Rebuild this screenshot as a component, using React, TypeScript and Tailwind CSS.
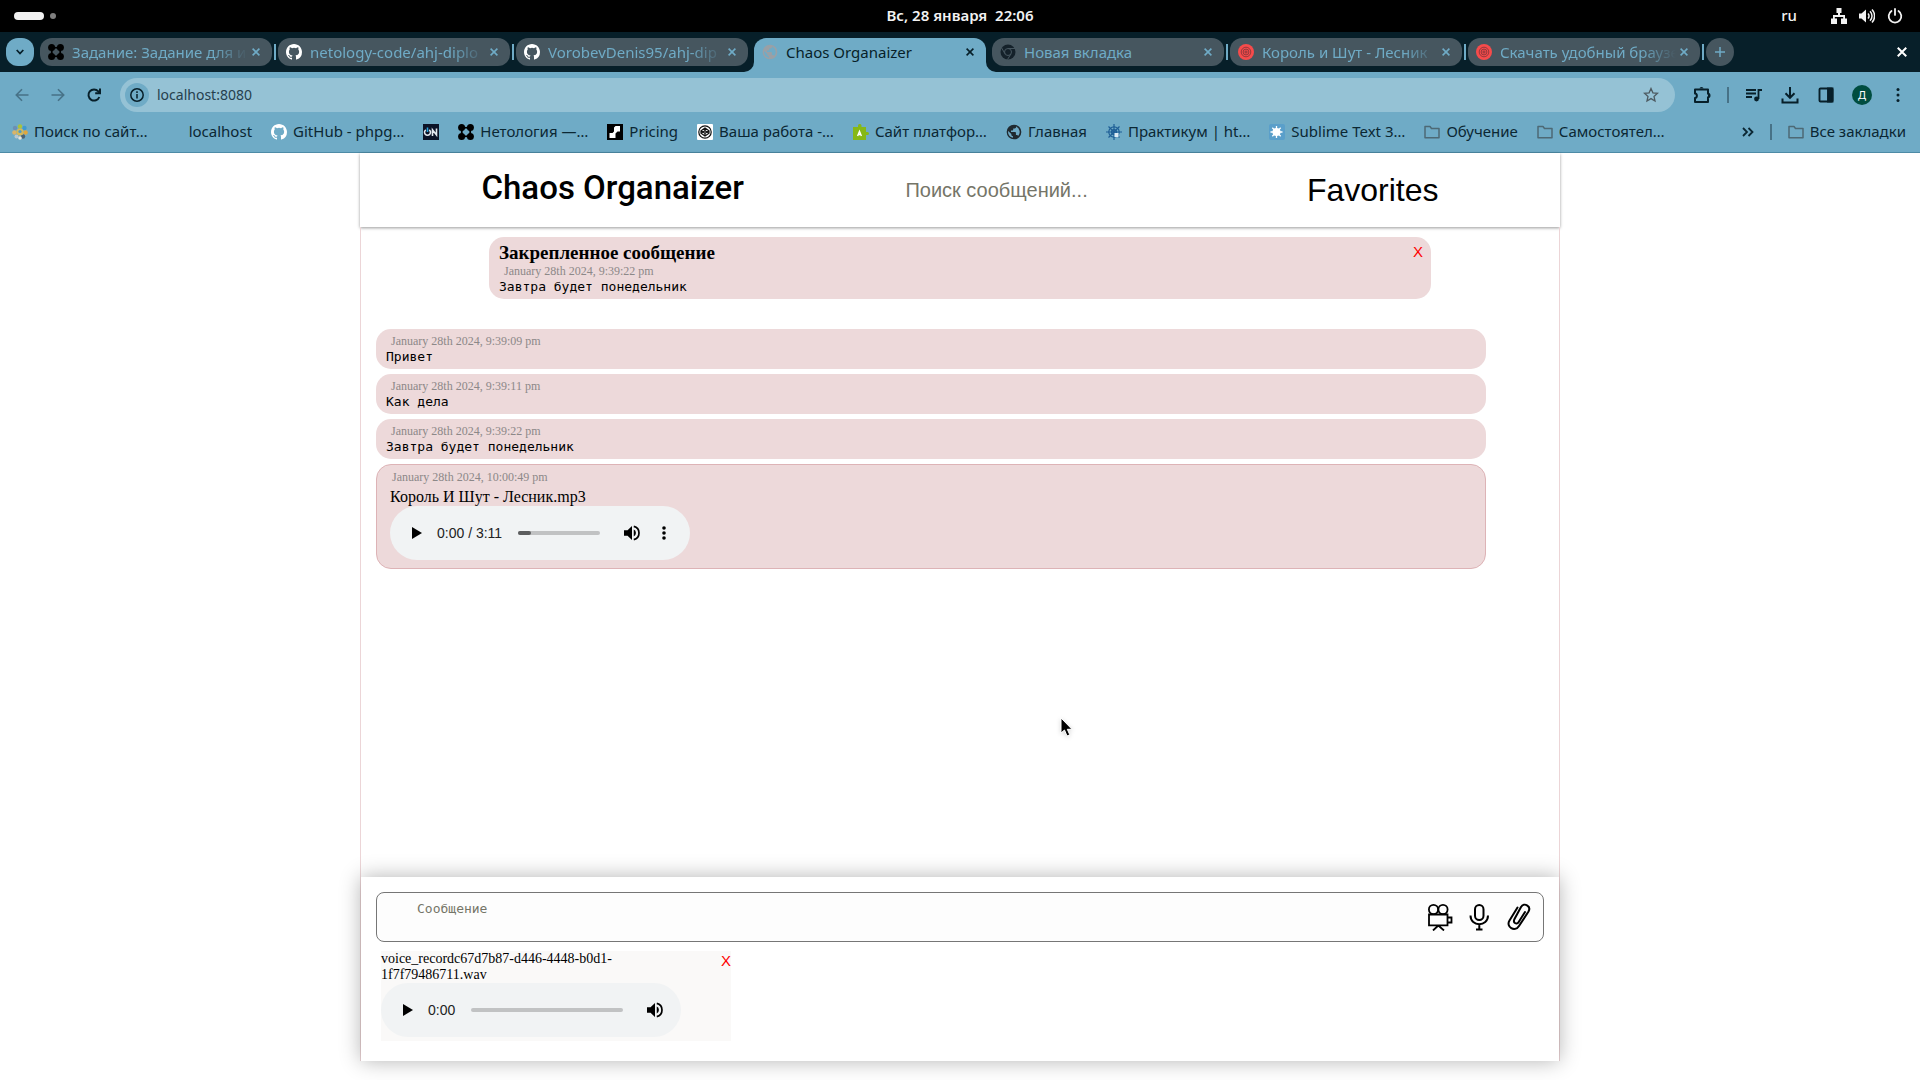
import type { ReactNode } from "react";

type IconProps = { className?: string };

function GitHubIcon({ className }: IconProps) {
  return (
    <svg viewBox="0 0 16 16" fill="#fff" className={className} aria-hidden="true">
      <path d="M8 0C3.58 0 0 3.58 0 8c0 3.54 2.29 6.53 5.47 7.59.4.07.55-.17.55-.38 0-.19-.01-.82-.01-1.49-2.01.37-2.53-.49-2.69-.94-.09-.23-.48-.94-.82-1.13-.28-.15-.68-.52-.01-.53.63-.01 1.08.58 1.23.82.72 1.21 1.87.87 2.33.66.07-.52.28-.87.51-1.07-1.78-.2-3.64-.89-3.64-3.95 0-.87.31-1.59.82-2.15-.08-.2-.36-1.02.08-2.12 0 0 .67-.21 2.2.82a7.6 7.6 0 0 1 4 0c1.53-1.04 2.2-.82 2.2-.82.44 1.1.16 1.92.08 2.12.51.56.82 1.27.82 2.15 0 3.07-1.87 3.75-3.65 3.95.29.25.54.73.54 1.48 0 1.07-.01 1.93-.01 2.2 0 .21.15.46.55.38A8.01 8.01 0 0 0 16 8c0-4.42-3.58-8-8-8Z" />
    </svg>
  );
}

function NetologyIcon({ className }: IconProps) {
  return (
    <svg viewBox="0 0 16 16" className={className} aria-hidden="true">
      <circle cx="3.600" cy="3.600" r="3.500" />
      <circle cx="12.400" cy="3.600" r="3.500" />
      <circle cx="3.600" cy="12.400" r="3.500" />
      <circle cx="12.400" cy="12.400" r="3.500" />
      <circle cx="8" cy="8" r="4.300" fill="none" stroke="#000" strokeWidth="1.800" />
    </svg>
  );
}

function GlobeIcon({ className }: IconProps) {
  return (
    <svg viewBox="0 0 24 24" fill="currentColor" className={className} aria-hidden="true">
      <path d="M12 1a11 11 0 1 0 0 22 11 11 0 0 0 0-22Zm-1.500 19.800A9 9 0 0 1 3.200 10.500L8 15v1.200c0 1.200 1 2.200 2.500 2.200v2.400Zm7.700-2.700c-.3-.9-1.100-1.600-2.100-1.600h-1.200v-3.300c0-.6-.5-1.100-1.100-1.100H7.500V9.900h2.200c.6 0 1.100-.5 1.100-1.100V6.600H13c1.200 0 2.200-1 2.200-2.200v-.5a9 9 0 0 1 3 14.200Z" />
    </svg>
  );
}

function ChromeIcon({ className }: IconProps) {
  return (
    <svg viewBox="0 0 16 16" className={className} aria-hidden="true">
      <circle cx="8" cy="8" r="7.500" fill="#14212a" />
      <g fill="none" stroke="#46565f" strokeWidth="1">
        <circle cx="8" cy="8" r="3.500" />
        <path d="M8 4.500h7M5 9.800 1.600 3.900M11 9.800 7.500 15.500" />
      </g>
      <circle cx="8" cy="8" r="2" fill="#14212a" />
    </svg>
  );
}

function TargetIcon({ className }: IconProps) {
  return (
    <svg viewBox="0 0 16 16" className={className} aria-hidden="true">
      <circle cx="8" cy="8" r="8" fill="#f64b4b" />
      <g fill="none" stroke="#6b2f35" strokeWidth="0.700">
        <circle cx="8" cy="8" r="4.800" />
        <circle cx="8" cy="8" r="2.900" />
        <circle cx="8" cy="8" r="1.100" />
      </g>
    </svg>
  );
}

function ColorGlobeIcon({ className }: IconProps) {
  return (
    <svg viewBox="0 0 16 16" className={className} aria-hidden="true">
      <circle cx="8" cy="2.500" r="2.200" fill="#a9c33c" />
      <circle cx="3" cy="4" r="2.200" fill="#6c8fb5" />
      <circle cx="12.500" cy="4" r="2.200" fill="#3f9ad0" />
      <circle cx="2.400" cy="8.500" r="2.200" fill="#d9b46a" />
      <circle cx="13.600" cy="8.500" r="2.200" fill="#e0a63c" />
      <circle cx="4.500" cy="12.500" r="2" fill="#b9c7cf" />
      <circle cx="11" cy="12.500" r="2.200" fill="#4b6272" />
      <circle cx="8" cy="14" r="1.800" fill="#e8e4da" />
      <circle cx="8" cy="8" r="3.600" fill="#d4b85a" />
      <circle cx="8" cy="7.500" r="1.600" fill="#4f9bc0" />
    </svg>
  );
}

function OnIcon({ className }: IconProps) {
  return (
    <svg viewBox="0 0 16 16" className={className} aria-hidden="true">
      <path d="M0 0h16v16H0z" fill="#0b1226" />
      <g fill="none" strokeWidth="1.600">
        <path d="M2.800 5.800a3 3 0 1 0 3.400 0M9.500 12V5.800l4 5.200V4.500" stroke="#e6eaf0" />
        <path d="M4.500 3.500v4.500" stroke="#29a3e0" />
      </g>
    </svg>
  );
}

function PricingIcon({ className }: IconProps) {
  return (
    <svg viewBox="0 0 16 16" className={className} aria-hidden="true">
      <path d="M0 0h16v16H0z" />
      <path d="M8.500 2h4.500v5.500h-2.500L8.500 9.500V14H2.500V9h3L7 7.500V3.500z" fill="#fff" />
    </svg>
  );
}

function CodepenIcon({ className }: IconProps) {
  return (
    <svg viewBox="0 0 16 16" className={className} aria-hidden="true">
      <rect width="16" height="16" rx="1" fill="#fff" />
      <g fill="none" stroke="#111" strokeWidth="1.200">
        <circle cx="8" cy="8" r="6.200" />
        <path d="M8 4 12 6.700v2.600L8 12 4 9.300V6.700zM4 6.700l4 2.600 4-2.600M4 9.300l4-2.600 4 2.600M8 4v2.700M8 9.300V12" />
      </g>
    </svg>
  );
}

function PuzzleAIcon({ className }: IconProps) {
  return (
    <svg viewBox="0 0 16 16" className={className} aria-hidden="true">
      <path d="M0 3h5V1.500a1.800 1.800 0 0 1 3.500 0V3H13v5h1.500a1.500 1.500 0 0 1 0 3H13v5H0z" fill="#86b817" />
      <path d="M4.600 12 6.500 7.300 8.400 12M5.300 10.500h2.500" fill="none" stroke="#fff" strokeWidth="1.400" />
    </svg>
  );
}

function WheelIcon({ className }: IconProps) {
  return (
    <svg viewBox="0 0 16 16" className={className} aria-hidden="true">
      <g fill="none" stroke="#1f5f96" strokeWidth="1.200">
        <circle cx="8" cy="8" r="5.200" />
        <circle cx="8" cy="8" r="2.500" />
        <path d="M8 0v16M0 8h16M2.500 2.500l11 11M13.500 2.500l-11 11" />
      </g>
      <rect x="8.500" y="9" width="4" height="4" fill="#dcebf4" />
    </svg>
  );
}

function SublimeIcon({ className }: IconProps) {
  return (
    <svg viewBox="0 0 16 16" className={className} aria-hidden="true">
      <rect width="16" height="16" rx="2" fill="#5a9fca" />
      <circle cx="7.500" cy="8" r="4" fill="#fff" />
      <path d="M7.500 2v12M1.500 8h12M3.300 3.800l8.400 8.400M11.700 3.800l-8.400 8.400" stroke="#fff" strokeWidth="1.300" />
    </svg>
  );
}

function FolderIcon({ className }: IconProps) {
  return (
    <svg viewBox="0 0 16 16" fill="none" stroke="#4d6975" strokeWidth="1.500" className={className} aria-hidden="true">
      <path d="M1 2.500h5l1.500 2H15v9.300H1z" strokeLinejoin="round" />
    </svg>
  );
}

function CloseIcon({ className }: IconProps) {
  return (
    <svg viewBox="0 0 8 8" fill="none" stroke="currentColor" strokeWidth="1.600" className={className} aria-hidden="true">
      <path d="m.6.6 6.800 6.800M7.400.6.6 7.400" />
    </svg>
  );
}

type Tab = { title: string; icon: ReactNode; active?: boolean; divider?: boolean; fade?: boolean };

const tabs: Tab[] = [
  { title: "Задание: Задание для и", icon: <NetologyIcon className="size-4" />, divider: true, fade: true },
  { title: "netology-code/ahj-diplo", icon: <GitHubIcon className="size-4" />, divider: true, fade: true },
  { title: "VorobevDenis95/ahj-dip", icon: <GitHubIcon className="size-4" />, fade: true },
  { title: "Chaos Organaizer", icon: <GlobeIcon className="size-4 text-[#9aa0a6]" />, active: true },
  { title: "Новая вкладка", icon: <ChromeIcon className="size-4" />, divider: true },
  { title: "Король и Шут - Лесник", icon: <TargetIcon className="size-4" />, divider: true, fade: true },
  { title: "Скачать удобный браузе", icon: <TargetIcon className="size-4" />, divider: true, fade: true },
];

function TabItem({ tab }: { tab: Tab }) {
  return (
    <div
      className={
        tab.active
          ? "relative flex h-[34px] w-[232px] shrink items-start rounded-t-xl bg-[#6fabc6] pt-1 pr-3 pl-2 text-[#071f29]"
          : "flex h-7 w-[232px] shrink items-start rounded-xl bg-[#46565f] pt-1 pr-3 pl-2 text-[#6fabc6]"
      }
    >
      {tab.active && (
        <>
          <svg viewBox="0 0 10 10" fill="#6fabc6" className="absolute bottom-0 -left-2.5 size-2.5" aria-hidden="true">
            <path d="M10 0v10H0A10 10 0 0 0 10 0Z" />
          </svg>
          <svg viewBox="0 0 10 10" fill="#6fabc6" className="absolute -right-2.5 bottom-0 size-2.5" aria-hidden="true">
            <path d="M0 0v10h10A10 10 0 0 1 0 0Z" />
          </svg>
        </>
      )}
      <button type="button" className="flex min-w-0 flex-1 items-center gap-2 text-left">
        <span className="shrink-0">{tab.icon}</span>
        <span
          className={
            tab.fade
              ? "min-w-0 flex-1 overflow-hidden mask-r-from-80% text-[15px] leading-5 whitespace-nowrap"
              : "min-w-0 flex-1 overflow-hidden text-[15px] leading-5 whitespace-nowrap"
          }
        >
          {tab.title}
        </span>
      </button>
      <button type="button" aria-label={"Закрыть: " + tab.title} className="ml-1 flex h-5 w-2 shrink-0 items-center">
        <CloseIcon className="size-2" />
      </button>
    </div>
  );
}

function SystemBar() {
  return (
    <div className="grid h-8 grid-cols-3 items-center bg-black px-3.5 text-[15px] leading-5 font-semibold text-[#f2f2f2]">
      <div className="flex items-center gap-1.5">
        <span className="h-2 w-[30px] rounded-full bg-[#f2f2f2]" />
        <span className="size-1.5 rounded-full bg-[#7f7f7f]" />
      </div>
      <div className="pb-0.5 text-center whitespace-pre">Вс, 28 января  22:06</div>
      <div className="flex items-center justify-end">
        <span className="mr-[34px] pb-0.5 font-medium">ru</span>
        <svg viewBox="0 0 16 16" fill="#f2f2f2" className="mr-3 size-4" aria-hidden="true">
          <path d="M5.500 0h5v5H9v2h5v3.500h2V16h-6v-5.500h2.200V9H3.800v1.500H6V16H0v-5.500h2V7h5V5H5.500z" />
        </svg>
        <svg viewBox="0 0 16 16" className="mr-3 size-4" aria-hidden="true">
          <path d="M0 5.500h2.500L7 1.500v13l-4.500-4H0z" fill="#f2f2f2" />
          <path d="M9 5.500a3.500 3.500 0 0 1 0 5M11 3.300a6.500 6.500 0 0 1 0 9.400M13 1.500a9.500 9.500 0 0 1 0 13" fill="none" stroke="#f2f2f2" strokeWidth="1.500" />
        </svg>
        <svg viewBox="0 0 16 16" fill="none" stroke="#f2f2f2" strokeWidth="1.800" strokeLinecap="round" className="mr-[3px] size-4" aria-hidden="true">
          <path d="M4.500 3a6.300 6.300 0 1 0 7 0M8 .9v6" />
        </svg>
      </div>
    </div>
  );
}

function TabStrip() {
  return (
    <div className="flex h-10 items-start bg-[#071f29] pt-1.5 pr-3 pl-1.5">
      <button
        type="button"
        aria-label="Поиск вкладок"
        className="mr-1.5 flex size-7 shrink-0 items-center justify-center rounded-xl bg-[#6fabc6] text-[#071f29]"
      >
        <svg viewBox="0 0 8 6" fill="none" stroke="currentColor" strokeWidth="1.800" className="h-1.5 w-2" aria-hidden="true">
          <path d="m.7 1 3.300 3.500L7.300 1" />
        </svg>
      </button>
      {tabs.map((tab) => (
        <div key={tab.title} className="flex min-w-0 items-start">
          <TabItem tab={tab} />
          <span
            className={
              tab.divider
                ? "mx-0.5 mt-1.5 h-4 w-0.5 shrink-0 bg-[#6fabc6]"
                : "mx-0.5 w-0.5 shrink-0"
            }
          />
        </div>
      ))}
      <button
        type="button"
        aria-label="Новая вкладка"
        className="flex size-7 shrink-0 items-center justify-center rounded-full bg-[#46565f] text-[#6fabc6]"
      >
        <svg viewBox="0 0 10 10" stroke="currentColor" strokeWidth="1.500" className="size-2.5" aria-hidden="true">
          <path d="M5 0v10M0 5h10" />
        </svg>
      </button>
      <button type="button" aria-label="Закрыть окно" className="ml-auto flex h-7 items-center px-px text-white">
        <CloseIcon className="size-2.5" />
      </button>
    </div>
  );
}

function ToolButton({ label, className, children }: { label: string; className?: string; children: ReactNode }) {
  return (
    <button type="button" aria-label={label} className={"shrink-0 " + (className ?? "")}>
      {children}
    </button>
  );
}

function Toolbar() {
  return (
    <div className="flex items-center px-3.5 pt-1.5 text-[#071f29]">
      <ToolButton label="Назад" className="text-[#477287]">
        <svg viewBox="0 0 16 16" fill="none" stroke="currentColor" strokeWidth="1.600" className="size-4" aria-hidden="true">
          <path d="M14.500 8H2.500M8 2.300 2.300 8 8 13.700" />
        </svg>
      </ToolButton>
      <ToolButton label="Вперёд" className="ml-5 text-[#477287]">
        <svg viewBox="0 0 16 16" fill="none" stroke="currentColor" strokeWidth="1.600" className="size-4" aria-hidden="true">
          <path d="M1.500 8h12M8 2.300 13.700 8 8 13.700" />
        </svg>
      </ToolButton>
      <ToolButton label="Обновить" className="ml-5">
        <svg viewBox="0 0 16 16" fill="none" stroke="currentColor" strokeWidth="2" className="size-4" aria-hidden="true">
          <path d="M13.300 10A5.600 5.600 0 1 1 12.300 4.300L13.800 6" />
          <path d="M14 1.500V6.200H9.200" />
        </svg>
      </ToolButton>
      <div className="ml-[18px] flex h-[34px] min-w-0 flex-1 items-center rounded-full bg-[#95c2d5] pr-4 pl-[5px]">
        <button
          type="button"
          aria-label="Сведения о сайте"
          className="flex size-6 shrink-0 items-center justify-center rounded-full bg-[#6fabc6]"
        >
          <svg viewBox="0 0 14 14" fill="none" stroke="currentColor" strokeWidth="1.500" className="size-3.5" aria-hidden="true">
            <circle cx="7" cy="7" r="6.200" />
            <path d="M7 6v4.500M7 3.300V5" />
          </svg>
        </button>
        <input
          type="text"
          aria-label="Адресная строка"
          defaultValue="localhost:8080"
          className="ml-2 min-w-0 flex-1 bg-transparent text-sm text-[#25404d] outline-none"
        />
        <ToolButton label="Добавить в закладки" className="text-[#4d5a61]">
          <svg viewBox="0 0 16 16" fill="none" stroke="currentColor" strokeWidth="1.300" className="size-4" aria-hidden="true">
            <path d="m8 1.500 1.900 4.300 4.600.5-3.500 3.100 1 4.600-4-2.400-4 2.400 1-4.600L1.500 6.300l4.600-.5z" />
          </svg>
        </ToolButton>
      </div>
      <ToolButton label="Расширения" className="ml-[18px]">
        <svg viewBox="0 0 18 18" fill="none" stroke="currentColor" strokeWidth="2" strokeLinejoin="round" className="size-[18px]" aria-hidden="true">
          <path d="M2 3.500h13v4.200c2 0 2 3.600 0 3.600V16H2v-4c2.500-.3 2.500-4.200 0-4.500z" />
          <path d="M6.500 2.500a2 1.600 0 0 1 4 0z" fill="currentColor" stroke="none" />
          <path d="M15 7.500a1.600 2 0 0 1 0 4z" fill="currentColor" stroke="none" />
        </svg>
      </ToolButton>
      <span className="mx-4 h-4 w-0.5 bg-[#477287]" />
      <ToolButton label="Управление мультимедиа">
        <svg viewBox="0 0 18 18" fill="none" stroke="currentColor" strokeWidth="1.800" className="size-[18px]" aria-hidden="true">
          <path d="M1 4h10M1 7.500h10M1 11h6M13.500 13V4H17" />
          <circle cx="11.500" cy="13" r="2.400" fill="currentColor" stroke="none" />
        </svg>
      </ToolButton>
      <ToolButton label="Загрузки" className="ml-[18px]">
        <svg viewBox="0 0 18 18" fill="none" stroke="currentColor" strokeWidth="2" className="size-[18px]" aria-hidden="true">
          <path d="M9 1v10.500M4.500 7.300 9 11.800l4.500-4.500M1.500 12.500v4h15v-4" />
        </svg>
      </ToolButton>
      <ToolButton label="Боковая панель" className="ml-[18px]">
        <svg viewBox="0 0 18 18" fill="none" stroke="currentColor" strokeWidth="1.900" className="size-[18px]" aria-hidden="true">
          <rect x="2.500" y="2.500" width="13" height="13" rx="1" />
          <path d="M11 2.500h4.500v13H11z" fill="currentColor" />
        </svg>
      </ToolButton>
      <ToolButton label="Профиль" className="ml-[17px] flex size-5 items-center justify-center rounded-full bg-[#004d40] text-[11px] text-white">
        Д
      </ToolButton>
      <ToolButton label="Меню" className="ml-[18px]">
        <svg viewBox="0 0 16 16" fill="currentColor" className="size-4" aria-hidden="true">
          <circle cx="8" cy="2.500" r="1.500" />
          <circle cx="8" cy="8" r="1.500" />
          <circle cx="8" cy="13.500" r="1.500" />
        </svg>
      </ToolButton>
    </div>
  );
}

type Bookmark = { label?: string; name?: string; icon?: ReactNode };

const bookmarks: Bookmark[] = [
  { label: "Поиск по сайт…", icon: <ColorGlobeIcon className="size-4" /> },
  { label: "localhost" },
  { label: "GitHub - phpg…", icon: <GitHubIcon className="size-4" /> },
  { name: "ON", icon: <OnIcon className="size-4" /> },
  { label: "Нетология —…", icon: <NetologyIcon className="size-4" /> },
  { label: "Pricing", icon: <PricingIcon className="size-4" /> },
  { label: "Ваша работа -…", icon: <CodepenIcon className="size-4" /> },
  { label: "Сайт платфор…", icon: <PuzzleAIcon className="size-4" /> },
  { label: "Главная", icon: <GlobeIcon className="size-4 text-[#202a30]" /> },
  { label: "Практикум | ht…", icon: <WheelIcon className="size-4" /> },
  { label: "Sublime Text 3…", icon: <SublimeIcon className="size-4" /> },
  { label: "Обучение", icon: <FolderIcon className="size-4" /> },
  { label: "Самостоятел…", icon: <FolderIcon className="size-4" /> },
];

function BookmarksBar() {
  return (
    <nav className="flex h-10 items-center pr-3.5 pl-3 text-[15px] leading-5 text-[#0b2733]">
      <div className="flex min-w-0 items-center gap-[19px]">
        {bookmarks.map((bookmark) => (
          <a
            key={bookmark.label ?? bookmark.name}
            href="#"
            aria-label={bookmark.label ?? bookmark.name}
            className="flex shrink-0 items-center gap-1.5 whitespace-nowrap"
          >
            <span className="size-4">{bookmark.icon}</span>
            {bookmark.label && <span className="pb-0.5">{bookmark.label}</span>}
          </a>
        ))}
      </div>
      <button type="button" aria-label="Другие закладки" className="ml-auto">
        <svg viewBox="0 0 12 10" fill="none" stroke="currentColor" strokeWidth="1.800" className="h-2.5 w-3" aria-hidden="true">
          <path d="m1 1 4 4-4 4M6.500 1l4 4-4 4" />
        </svg>
      </button>
      <span className="mx-4 h-4 w-0.5 bg-[#477287]" />
      <a href="#" className="flex shrink-0 items-center gap-1.5 whitespace-nowrap">
        <FolderIcon className="size-4" />
        <span className="pb-0.5">Все закладки</span>
      </a>
    </nav>
  );
}

function AudioPlayer({ time, progress, menu }: { time: string; progress: number; menu?: boolean }) {
  return (
    <div className="flex h-[54px] w-[300px] items-center rounded-full bg-[#f1f3f4] px-2.5 font-['Liberation_Sans',Arial,sans-serif]">
      <button type="button" aria-label="Воспроизвести" className="flex size-8 shrink-0 items-center justify-center">
        <svg viewBox="0 0 10 12" className="ml-0.5 h-3 w-2.5" aria-hidden="true">
          <path d="M0 0v12l10-6z" />
        </svg>
      </button>
      <span className="ml-[5px] text-sm text-[#222]">{time}</span>
      <div className="relative mx-4 flex h-1 min-w-0 flex-1 rounded-full bg-[#c1c2c3]">
        <span className="h-1 rounded-full bg-[#5c5d5e]" style={{ width: progress + "%" }} />
        <input
          type="range"
          aria-label="Позиция"
          defaultValue={0}
          className="absolute inset-0 h-1 w-full appearance-none opacity-0"
        />
      </div>
      <button type="button" aria-label="Громкость" className="flex size-8 shrink-0 items-center justify-center">
        <svg viewBox="0 0 18 18" className="size-4" aria-hidden="true">
          <path d="M0 6v6h4l5 5V1L4 6z" />
          <path d="M11 5.200v7.600a4.200 4.200 0 0 0 0-7.600Z" />
          <path d="M11 1.600a7.600 7.600 0 0 1 0 14.800" fill="none" stroke="#000" strokeWidth="1.900" />
        </svg>
      </button>
      {menu && (
        <button type="button" aria-label="Другие действия" className="flex size-8 shrink-0 items-center justify-center">
          <svg viewBox="0 0 4 14" className="h-3.5 w-1" aria-hidden="true">
            <circle cx="2" cy="2" r="1.800" />
            <circle cx="2" cy="7" r="1.800" />
            <circle cx="2" cy="12" r="1.800" />
          </svg>
        </button>
      )}
    </div>
  );
}

function Stamp({ children }: { children: ReactNode }) {
  return <div className="ml-[5px] text-xs leading-[15px] text-[#8c8888]">{children}</div>;
}

function MessageText({ children }: { children: ReactNode }) {
  return <p className="font-['DejaVu_Sans_Mono',monospace] text-[13px] leading-[15px]">{children}</p>;
}

const messages = [
  { stamp: "January 28th 2024, 9:39:09 pm", text: "Привет" },
  { stamp: "January 28th 2024, 9:39:11 pm", text: "Как дела" },
  { stamp: "January 28th 2024, 9:39:22 pm", text: "Завтра будет понедельник" },
];

function AppHeader() {
  return (
    <header className="flex h-[74px] items-center justify-evenly bg-white font-['Liberation_Sans',Arial,sans-serif] shadow-[0_1px_3px_rgba(0,0,0,0.4)]">
      <h1 className="pb-1 font-[Roboto,sans-serif] text-[33px] leading-9 font-medium whitespace-nowrap">
        Chaos Organaizer
      </h1>
      <input
        type="search"
        aria-label="Поиск сообщений"
        placeholder="Поиск сообщений..."
        className="h-10 w-80 px-10 text-xl outline-none placeholder:text-[#757568]"
      />
      <button type="button" className="text-[32px] leading-9">
        Favorites
      </button>
    </header>
  );
}

function Composer() {
  return (
    <footer className="relative bg-white px-[15px] pt-[15px] pb-5 shadow-[0_0_20px_rgba(0,0,0,0.3)]">
      <div className="flex h-[50px] items-center rounded-lg border border-[#767676] bg-[#fdfdfd] pr-2.5">
        <textarea
          aria-label="Сообщение"
          placeholder="Сообщение"
          className="h-12 min-w-0 flex-1 resize-none bg-transparent pt-2 pl-10 font-['DejaVu_Sans_Mono',monospace] text-[13px] leading-4 outline-none placeholder:text-[#757568]"
        />
        <button type="button" aria-label="Записать видео" className="mr-3">
          <svg viewBox="0 0 28 28" fill="none" stroke="#000" strokeWidth="1.800" className="size-7" aria-hidden="true">
            <circle cx="8.500" cy="6.500" r="4.600" />
            <circle cx="18" cy="6.500" r="4.600" />
            <path d="M4 11.500h18.500v10.800H4zM22.500 14.500h4v5h-4M13.300 22.500 8 27.500M13.300 22.500l5.700 5" />
          </svg>
        </button>
        <button type="button" aria-label="Записать аудио" className="mr-3">
          <svg viewBox="0 0 28 28" fill="none" stroke="#000" strokeWidth="2" className="size-7" aria-hidden="true">
            <rect x="10" y="2" width="8.500" height="15" rx="4.250" />
            <path d="M5.500 12.500c0 11.500 17.500 11.500 17.500 0M14.300 21.500V26.500M11 26.500h6.500" />
          </svg>
        </button>
        <button type="button" aria-label="Прикрепить файл">
          <svg viewBox="0 0 28 28" fill="none" stroke="#000" strokeWidth="2" strokeLinecap="round" className="size-7" aria-hidden="true">
            <path d="M12.500 4.500 4.500 17.500c-4 6.500 5.500 12 9.500 5.500L23.500 8.500c3-5.500-4.500-9.500-7.500-4.500L9.500 16c-2 4 2.500 6.500 4.500 2.500l6-9.500" />
          </svg>
        </button>
      </div>
      <div className="mt-[9px] ml-[5px] flex w-[350px] items-start justify-between bg-[#faf9f8] pb-1">
        <div className="w-[300px] text-sm leading-4">
          voice_recordc67d7b87-d446-4448-b0d1-1f7f79486711.wav
          <AudioPlayer time="0:00" progress={0} />
        </div>
        <button type="button" aria-label="Удалить вложение" className="font-['Liberation_Sans',Arial,sans-serif] text-[15px] leading-5 text-[#ff0000]">
          X
        </button>
      </div>
    </footer>
  );
}

export default function App() {
  return (
    <div className="flex min-h-screen flex-col overflow-x-hidden bg-white font-['Noto_Sans',sans-serif]">
      <SystemBar />
      <TabStrip />
      <div className="border-b border-[#4d8ba6] bg-[#6fabc6]">
        <Toolbar />
        <BookmarksBar />
      </div>
      <div className="relative mx-auto flex w-full max-w-[1200px] flex-1 flex-col pb-[19px] font-['Liberation_Serif','Times_New_Roman',serif] text-black">
        <AppHeader />
        <div className="flex flex-1 flex-col border-x border-[#ecd5d7]">
          <main className="flex flex-1 flex-col pt-2.5 pl-[15px]">
            <section className="mr-32 ml-[113px] flex justify-between rounded-[15px] bg-[#edd9da] py-[5px] pr-2 pl-2.5">
              <div>
                <h2 className="text-[19px] leading-[22px] font-bold">Закрепленное сообщение</h2>
                <Stamp>January 28th 2024, 9:39:22 pm</Stamp>
                <MessageText>Завтра будет понедельник</MessageText>
              </div>
              <button type="button" aria-label="Открепить" className="self-start font-['Liberation_Sans',Arial,sans-serif] text-[15px] leading-5 text-[#ff0000]">
                X
              </button>
            </section>
            <ul className="mt-[30px] mr-[73px] flex flex-col gap-[5px]">
              {messages.map((message) => (
                <li key={message.stamp} className="rounded-[15px] bg-[#edd9da] px-2.5 py-[5px]">
                  <Stamp>{message.stamp}</Stamp>
                  <MessageText>{message.text}</MessageText>
                </li>
              ))}
              <li className="rounded-[15px] border border-[#ddb3b6] bg-[#edd9da] px-2.5 pt-[5px] pb-2">
                <Stamp>January 28th 2024, 10:00:49 pm</Stamp>
                <div className="ml-[3px] pt-[3px]">
                  <div className="text-base leading-[18px]">Король И Шут - Лесник.mp3</div>
                  <AudioPlayer time="0:00 / 3:11" progress={16} menu />
                </div>
              </li>
            </ul>
            <svg viewBox="0 0 14 20" className="absolute top-[564px] left-[700px] h-5 w-3.5 drop-shadow-sm" aria-hidden="true">
              <path d="M1 1v15l3.500-3 2.500 6 2.800-1.200-2.500-5.500H12z" stroke="#fff" strokeWidth="1" />
            </svg>
          </main>
          <Composer />
        </div>
      </div>
    </div>
  );
}
